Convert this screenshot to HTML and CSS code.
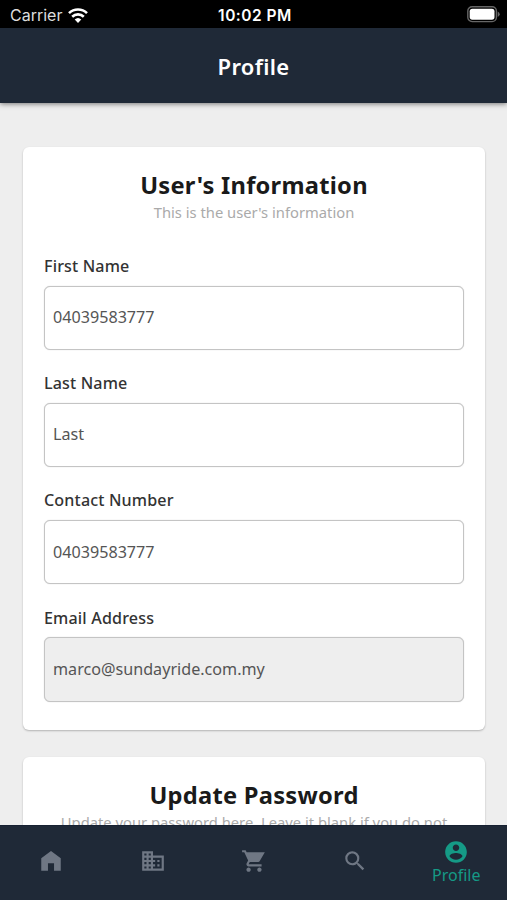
FILE: index.html
```html
<!DOCTYPE html>
<html lang="en">
<head>
<meta charset="utf-8">
<title>Profile</title>
<link rel="stylesheet" href="styles.css">
</head>
<body>
<div class="screen">
  <div class="status">
    <div class="carrier"><span class="carrier-name">Carrier</span>
      <svg class="wifi" viewBox="0 0 20 15"><path d="M10 15 6.7 11.6a4.8 4.8 0 0 1 6.6 0z"/><path class="arc" d="M4.2 8.7a8.3 8.3 0 0 1 11.6 0M1 5.1a13 13 0 0 1 18 0"/></svg>
    </div>
    <div class="clock">10:02 PM</div>
    <svg class="battery" viewBox="0 0 33 17"><rect class="shell" x=".8" y=".8" width="28.6" height="14.8" rx="4.3"/><rect class="charge" x="2.7" y="2.7" width="24.8" height="11" rx="2.6"/><path class="tip" d="M30.7 5.5q2 1 2 2.7t-2 2.7z"/></svg>
  </div>
  <header class="topbar"><h1>Profile</h1></header>
  <main class="content">
    <section class="card info">
      <h2>User's Information</h2>
      <p class="hint">This is the user's information</p>
      <div class="fields">
        <div class="field"><label for="first">First Name</label><input id="first" value="04039583777"></div>
        <div class="field"><label for="last">Last Name</label><input id="last" value="Last"></div>
        <div class="field"><label for="phone">Contact Number</label><input id="phone" value="04039583777"></div>
        <div class="field"><label for="email">Email Address</label><input id="email" value="marco@sundayride.com.my" readonly class="locked"></div>
      </div>
    </section>
    <section class="card">
      <h2>Update Password</h2>
      <p class="hint">Update your password here. Leave it blank if you do not</p>
    </section>
  </main>
  <nav class="tabs">
    <a class="tab"><svg viewBox="0 0 24 24"><path d="M12 2.8 3 9.5V21h6.2v-7h5.6v7H21V9.5z"/></svg></a>
    <a class="tab"><svg viewBox="0 0 24 24"><path d="M12 7V3H2v18h20V7H12zM6 19H4v-2h2v2zm0-4H4v-2h2v2zm0-4H4V9h2v2zm0-4H4V5h2v2zm4 12H8v-2h2v2zm0-4H8v-2h2v2zm0-4H8V9h2v2zm0-4H8V5h2v2zm10 12h-8v-2h2v-2h-2v-2h2v-2h-2V9h8v10zm-2-8h-2v2h2v-2zm0 4h-2v2h2v-2z"/></svg></a>
    <a class="tab"><svg viewBox="0 0 24 24"><path d="M7 18c-1.1 0-1.99.9-1.99 2S5.9 22 7 22s2-.9 2-2-.9-2-2-2zM1 2v2h2l3.6 7.59-1.35 2.45c-.16.28-.25.61-.25.96 0 1.1.9 2 2 2h12v-2H7.42c-.14 0-.25-.11-.25-.25l.03-.12.9-1.63h7.45c.75 0 1.41-.41 1.75-1.03L22 4H5.21l-.94-2H1zm16 16c-1.1 0-1.99.9-1.99 2s.89 2 1.99 2 2-.9 2-2-.9-2-2-2z"/></svg></a>
    <a class="tab"><svg viewBox="0 0 24 24"><path d="M15.5 14h-.79l-.28-.27A6.47 6.47 0 0 0 16 9.5 6.5 6.5 0 1 0 9.5 16c1.61 0 3.09-.59 4.23-1.57l.27.28v.79l5 4.99L20.49 19l-4.99-5zm-6 0C7.01 14 5 11.99 5 9.5S7.01 5 9.5 5 14 7.01 14 9.5 11.99 14 9.5 14z"/></svg></a>
    <a class="tab active"><svg viewBox="0 0 24 24"><path d="M12 2C6.48 2 2 6.48 2 12s4.48 10 10 10 10-4.48 10-10S17.52 2 12 2zm0 3c1.66 0 3 1.34 3 3s-1.34 3-3 3-3-1.34-3-3 1.34-3 3-3zm0 14.2c-2.5 0-4.71-1.28-6-3.22.03-1.99 4-3.08 6-3.08 1.99 0 5.97 1.09 6 3.08-1.29 1.94-3.5 3.22-6 3.22z"/></svg><span>Profile</span></a>
  </nav>
</div>
</body>
</html>
```
FILE: styles.css
```css
* { box-sizing: border-box; }
body { margin: 0; font-family: "Noto Sans", sans-serif; background: #eee; }
.screen { display: flex; flex-direction: column; height: 900px; overflow: hidden; }
h1, h2, p { margin: 0; }

.status {
  flex: none;
  display: grid;
  grid-template-columns: 1fr auto 1fr;
  align-items: center;
  height: 28px;
  padding: 2px 7px 0 10px;
  background: #000;
  color: #fff;
  font-family: Inter, sans-serif;
  font-size: 16px;
}
.carrier { display: flex; align-items: center; gap: 6px; color: #ddd; }
.wifi { width: 20px; height: 15px; fill: #fff; }
.wifi .arc { fill: none; stroke: #fff; stroke-width: 2.6; }
.clock { font-weight: 600; font-size: 15.5px; letter-spacing: .5px; }
.battery { justify-self: end; width: 33px; height: 17px; margin-top: -1px; }
.shell { fill: none; stroke: #666; stroke-width: 1.4; }
.charge { fill: #fff; }
.tip { fill: #666; }

.topbar {
  flex: none;
  display: flex;
  align-items: center;
  justify-content: center;
  height: 75px;
  background: #1f2937;
  box-shadow: 0 1px 5px rgba(0, 0, 0, .5);
  z-index: 1;
}
h1 { color: #fff; font-size: 22px; line-height: 30px; font-weight: 600; letter-spacing: .3px; }

.content {
  flex: 1;
  min-height: 0;
  overflow: hidden;
  padding: 44px 22px 0 23px;
}
.card {
  height: 583px;
  margin-bottom: 27px;
  padding: 22px 21px 0;
  border-radius: 6px;
  background: #fff;
  box-shadow: 0 1px 2px rgba(0, 0, 0, .25);
}
h2 { color: #1a1a1a; font-size: 23.7px; line-height: 32px; font-weight: 700; letter-spacing: .25px; text-align: center; }
.hint { color: #aaa; font-size: 14.75px; line-height: 22px; text-align: center; white-space: nowrap; }
.fields { display: grid; grid-auto-rows: 117.2px; margin-top: 31px; }
.field label { display: block; height: 31.6px; line-height: 24px; color: #333; font-size: 16.1px; font-weight: 500; letter-spacing: .15px; }
.field input {
  display: block;
  width: 420px;
  height: 64.4px;
  padding: 0 8px 1px;
  border: 1.5px solid #c4c4c4;
  border-radius: 6px;
  background: #fff;
  box-shadow: 0 0 1px #c4c4c4;
  color: #555;
  font: 16.15px "Noto Sans", sans-serif;
}
.field .locked { background: #eee; }

.tabs {
  flex: none;
  display: grid;
  grid-template-columns: repeat(5, 1fr);
  height: 75px;
  background: #1f2937;
  border-top: 1px solid #172132;
  z-index: 1;
}
.tab { display: flex; flex-direction: column; align-items: center; padding: 22px 0 0 1px; color: #6f7784; }
.tab svg { width: 26px; height: 26px; fill: currentColor; }
.active { padding: 13px 0 0; color: #159a86; }
.active span { font-size: 16px; line-height: 20px; }
```
